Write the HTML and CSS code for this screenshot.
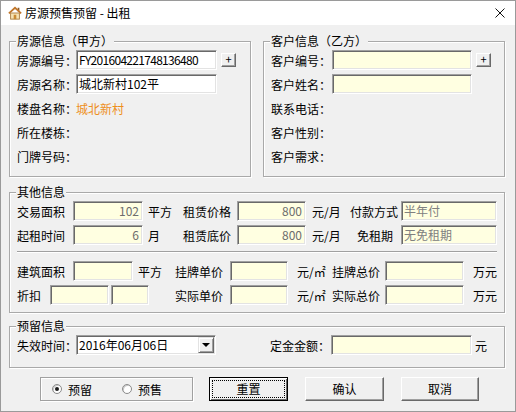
FILE: index.html
```html
<!DOCTYPE html>
<html lang="zh-CN">
<head>
<meta charset="utf-8">
<title>房源预售预留 - 出租</title>
<link rel="stylesheet" href="styles.css">
</head>
<body>
<div class="window">
  <div class="titlebar">
    <svg class="title-icon" viewBox="0 0 16 16" width="14" height="14">
      <rect x="11" y="2" width="2" height="4" fill="#8a5a2b"/>
      <rect x="3" y="8" width="10" height="7" fill="#f6e3b4" stroke="#a87a3c" stroke-width="1"/>
      <path d="M1 8.5 L8 2 L15 8.5" fill="none" stroke="#c0762a" stroke-width="2"/>
      <rect x="6.5" y="10" width="3" height="5" fill="#c98a34"/>
    </svg>
    <span class="title-text">房源预售预留 - 出租</span>
    <span class="close">
      <svg viewBox="0 0 10 10" width="10" height="10"><path d="M0.5 0.5 L9.5 9.5 M9.5 0.5 L0.5 9.5" stroke="#111" stroke-width="1" fill="none"/></svg>
    </span>
  </div>

  <div class="content">
    <div class="top-groups">
      <div class="group half">
        <span class="legend">房源信息（甲方）</span>
        <div class="frow"><span class="lbl">房源编号：</span><div class="field white w141 tight">FY201604221748136480</div><span class="plus">+</span></div>
        <div class="frow"><span class="lbl">房源名称：</span><div class="field white w141">城北新村102平</div></div>
        <div class="frow"><span class="lbl">楼盘名称：</span><span class="orange">城北新村</span></div>
        <div class="frow"><span class="lbl">所在楼栋：</span></div>
        <div class="frow"><span class="lbl">门牌号码：</span></div>
      </div>
      <div class="group half">
        <span class="legend">客户信息（乙方）</span>
        <div class="frow"><span class="lbl lbl-c">客户编号：</span><div class="field w140"></div><span class="plus">+</span></div>
        <div class="frow"><span class="lbl lbl-c">客户姓名：</span><div class="field w140"></div></div>
        <div class="frow"><span class="lbl lbl-c">联系电话：</span></div>
        <div class="frow"><span class="lbl lbl-c">客户性别：</span></div>
        <div class="frow"><span class="lbl lbl-c">客户需求：</span></div>
      </div>
    </div>

    <div class="group other">
      <span class="legend">其他信息</span>
      <div class="orow">
        <span class="c56">交易面积</span>
        <div class="field ro w70">102</div>
        <span class="u1">平方</span>
        <span class="c54">租赁价格</span>
        <div class="field ro w69">800</div>
        <span class="u2">元/月</span>
        <span class="c51">付款方式</span>
        <div class="field txt w96">半年付</div>
      </div>
      <div class="orow">
        <span class="c56">起租时间</span>
        <div class="field ro w70">6</div>
        <span class="u1">月</span>
        <span class="c54">租赁底价</span>
        <div class="field ro w69">800</div>
        <span class="u2">元/月</span>
        <span class="c51 ind">免租期</span>
        <div class="field txt w96">无免租期</div>
      </div>
      <div class="sep"></div>
      <div class="orow">
        <span class="c56">建筑面积</span>
        <div class="field w60"></div>
        <span class="u3">平方</span>
        <span class="c55">挂牌单价</span>
        <div class="field w58"></div>
        <span class="u4">元/㎡</span>
        <span class="c53">挂牌总价</span>
        <div class="field w79"></div>
        <span class="u5">万元</span>
      </div>
      <div class="orow">
        <span class="c33">折扣</span>
        <div class="field w59"></div>
        <div class="field w38 gap2"></div>
        <span class="c55 gap26">实际单价</span>
        <div class="field w58"></div>
        <span class="u4">元/㎡</span>
        <span class="c53">实际总价</span>
        <div class="field w79"></div>
        <span class="u5">万元</span>
      </div>
    </div>

    <div class="group reserve">
      <span class="legend">预留信息</span>
      <div class="orow">
        <span class="lbl">失效时间：</span>
        <div class="combo"><span class="combo-text">2016年06月06日</span><span class="combo-btn"><span class="tri"></span></span></div>
        <span class="c61">定金金额：</span>
        <div class="field w141"></div>
        <span class="u6">元</span>
      </div>
    </div>

    <div class="bottom">
      <div class="radiobox">
        <span class="radio first checked"></span><span class="rtext">预留</span>
        <span class="radio second"></span><span class="rtext">预售</span>
      </div>
      <div class="btn default w79">重置</div>
      <div class="btn w79 gap17">确认</div>
      <div class="btn w78 gap17">取消</div>
    </div>
  </div>
</div>
</body>
</html>
```

FILE: styles.css
```css
* { box-sizing: border-box; }

body {
  margin: 0;
  background: #ffffff;
  font-family: "Noto Sans CJK SC", "Liberation Sans", sans-serif;
  font-size: 12px;
  color: #000;
}

.window {
  width: 516px;
  height: 412px;
  border: 1px solid #9a9a9a;
  background: #f0f0f0;
  display: flex;
  flex-direction: column;
  overflow: hidden;
}

.titlebar {
  height: 24px;
  flex: none;
  background: #ffffff;
  display: flex;
  align-items: center;
  padding-left: 7px;
}

.title-icon { flex: none; margin-right: 3px; }

.title-text {
  flex: 1;
  font-size: 12px;
  line-height: 24px;
}

.close {
  width: 30px;
  height: 24px;
  display: flex;
  align-items: center;
  justify-content: center;
}

.content {
  padding: 16px 0 0 8px;
  display: flex;
  flex-direction: column;
}

.top-groups {
  display: flex;
  gap: 12px;
}

.group {
  position: relative;
  border: 1px solid #a9a9a9;
  box-shadow: inset 1px 1px #ffffff, 1px 1px #ffffff;
}

.legend {
  position: absolute;
  top: -8px;
  left: 6px;
  padding: 0 1px;
  line-height: 14px;
  background: #f0f0f0;
}

.half {
  width: 242px;
  height: 136px;
  padding: 8px 0 10px 7px;
}

.frow {
  display: flex;
  align-items: center;
  height: 20px;
}
.frow + .frow { margin-top: 4px; }

.lbl { width: 59px; flex: none; white-space: nowrap; }
.lbl-c { width: 61px; }

.orange { color: #ee8f1c; }

.field {
  height: 20px;
  flex: none;
  background: #ffffe1;
  border: 1px solid;
  border-color: #a0a0a0 #ffffff #ffffff #a0a0a0;
  box-shadow: inset 1px 1px #696969, inset -1px -1px #e3e3e3;
  padding: 0 2px 0 2px;
  line-height: 18px;
  white-space: nowrap;
  overflow: hidden;
}
.field.white { background: #ffffff; }
.field.tight { letter-spacing: -0.7px; }
.field.ro { text-align: right; color: #6d6d6d; padding-right: 3px; }
.field.txt { color: #808080; }

.w141 { width: 141px; }
.w140 { width: 140px; }
.w96 { width: 96px; }
.w79 { width: 79px; }
.w78 { width: 78px; }
.w70 { width: 70px; }
.w69 { width: 69px; }
.w60 { width: 60px; }
.w59 { width: 59px; }
.w58 { width: 58px; }
.w38 { width: 38px; }

.plus {
  width: 15px;
  height: 14px;
  margin-left: 4px;
  flex: none;
  background: #f0f0f0;
  border: 1px solid;
  border-color: #ffffff #696969 #696969 #ffffff;
  box-shadow: inset -1px -1px #a0a0a0;
  font-size: 11px;
  line-height: 11px;
  text-align: center;
}

.other {
  margin-top: 15px;
  width: 496px;
  height: 121px;
  padding: 8px 0 7px 7px;
}

.orow {
  display: flex;
  align-items: center;
  height: 20px;
  white-space: nowrap;
}
.orow + .orow { margin-top: 4px; }

.c56 { width: 56px; flex: none; }
.c55 { width: 55px; flex: none; }
.c54 { width: 54px; flex: none; }
.c53 { width: 53px; flex: none; }
.c51 { width: 51px; flex: none; }
.c33 { width: 33px; flex: none; }
.c61 { width: 61px; flex: none; margin-left: 54px; }
.ind { padding-left: 7px; }

.u1 { width: 35px; margin-left: 5px; flex: none; }
.u2 { width: 38px; margin-left: 6px; flex: none; }
.u3 { width: 37px; margin-left: 5px; flex: none; }
.u4 { width: 35px; margin-left: 9px; flex: none; }
.u5 { margin-left: 9px; flex: none; }
.u6 { margin-left: 3px; flex: none; }

.gap2 { margin-left: 2px; }
.gap26 { margin-left: 26px; }
.gap17 { margin-left: 17px; }

.sep {
  height: 1px;
  width: 480px;
  margin: 6px 0 9px 0;
  background: #a0a0a0;
  box-shadow: 0 1px #ffffff;
}

.reserve {
  margin-top: 13px;
  width: 496px;
  height: 42px;
  padding: 8px 0 12px 7px;
}

.combo {
  width: 140px;
  height: 20px;
  flex: none;
  display: flex;
  align-items: center;
  background: #ffffff;
  border: 1px solid;
  border-color: #a0a0a0 #ffffff #ffffff #a0a0a0;
  box-shadow: inset 1px 1px #696969, inset -1px -1px #e3e3e3;
  padding: 1px 1px 1px 2px;
}

.combo-text { flex: 1; line-height: 16px; }

.combo-btn {
  width: 16px;
  height: 16px;
  flex: none;
  display: flex;
  align-items: center;
  justify-content: center;
  background: #f0f0f0;
  border: 1px solid;
  border-color: #e3e3e3 #696969 #696969 #e3e3e3;
  box-shadow: inset 1px 1px #ffffff, inset -1px -1px #a0a0a0;
}

.tri {
  width: 0;
  height: 0;
  border-left: 4px solid transparent;
  border-right: 4px solid transparent;
  border-top: 4px solid #000;
}

.bottom {
  margin-top: 9px;
  margin-left: 31px;
  display: flex;
  align-items: center;
  height: 24px;
}

.radiobox {
  width: 153px;
  height: 24px;
  border: 1px solid #a0a0a0;
  box-shadow: inset 1px 1px #ffffff, 1px 1px #ffffff;
  display: flex;
  align-items: center;
  margin-right: 16px;
  flex: none;
}

.radio {
  width: 10px;
  height: 10px;
  border-radius: 50%;
  background: #ffffff;
  border: 1px solid #8a8a8a;
  box-shadow: inset 1px 1px #c8c8c8;
  flex: none;
  display: flex;
  align-items: center;
  justify-content: center;
}
.radio.first { margin-left: 11px; }
.radio.second { margin-left: 30px; }
.radio.checked::after {
  content: "";
  width: 4px;
  height: 4px;
  border-radius: 50%;
  background: #1a1a1a;
}

.rtext { margin-left: 6px; }

.btn {
  height: 24px;
  flex: none;
  background: #f0f0f0;
  border: 1px solid;
  border-color: #ffffff #696969 #696969 #ffffff;
  box-shadow: inset -1px -1px #a0a0a0;
  text-align: center;
  line-height: 21px;
}

.btn.default {
  border-color: #000;
  box-shadow: inset 1px 1px #ffffff, inset -1px -1px #696969;
  outline: 1px dotted #000;
  outline-offset: -4px;
}
```
